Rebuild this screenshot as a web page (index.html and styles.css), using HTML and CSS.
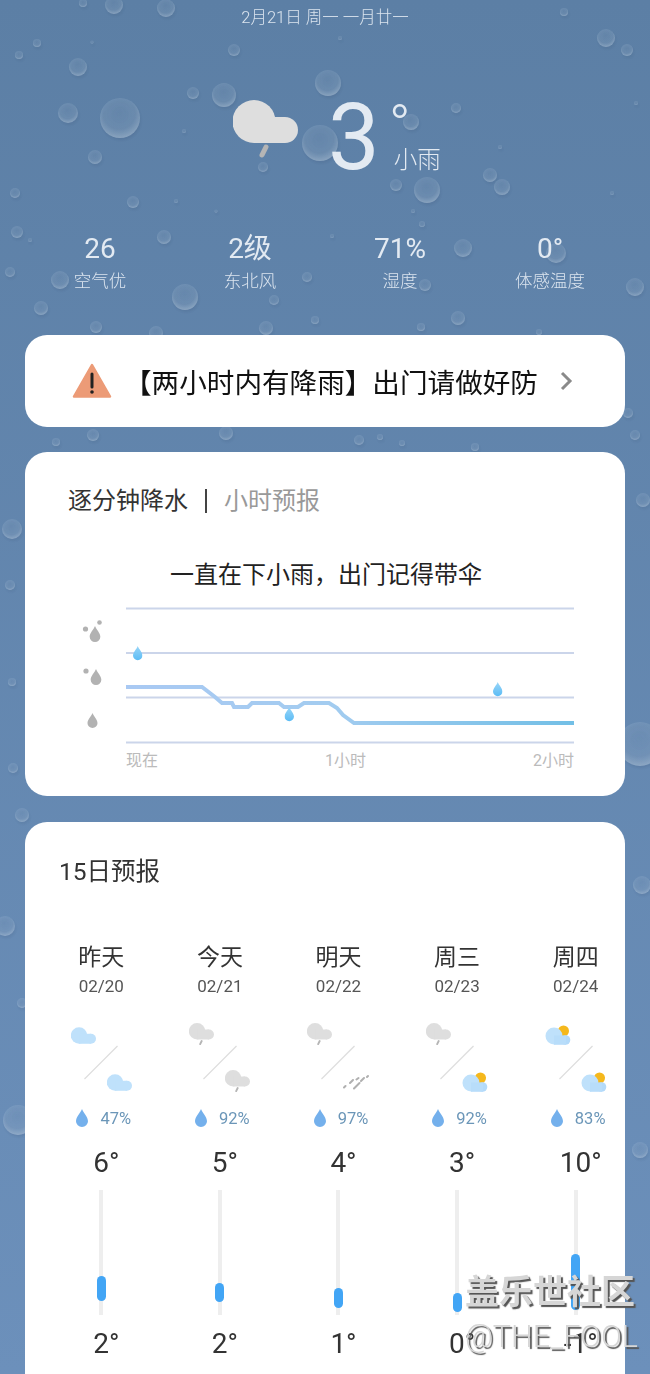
FILE: index.html
```html
<!DOCTYPE html>
<html lang="zh-CN">
<head>
  <meta charset="UTF-8" />
  <meta name="viewport" content="width=device-width, initial-scale=1.0" />
  <title>天气</title>
  <link rel="stylesheet" href="styles.css">
</head>
<body>
  <!-- shared icons -->
  <svg class="defs" width="0" height="0">
    <defs>
      <radialGradient id="dropFill" cx="48%" cy="38%" r="62%">
        <stop offset="0%" stop-color="#cfe0ee" stop-opacity="0.1" />
        <stop offset="65%" stop-color="#cfe0ee" stop-opacity="0.17" />
        <stop offset="100%" stop-color="#e4eff7" stop-opacity="0.42" />
      </radialGradient>
      <linearGradient id="lineFill" x1="0" x2="1" y1="0" y2="0">
        <stop offset="0%" stop-color="#a9c9f3" />
        <stop offset="45%" stop-color="#a3ccf0" />
        <stop offset="100%" stop-color="#72bfe6" />
      </linearGradient>
      <linearGradient id="skyDrop" x1="0" x2="0" y1="0" y2="1">
        <stop offset="0%" stop-color="#9ad6f8" />
        <stop offset="100%" stop-color="#5cbcf5" />
      </linearGradient>
      <g id="cloud">
        <circle cx="21" cy="21.500" r="21.500" />
        <circle cx="52" cy="30" r="13" />
        <rect x="21" y="17" width="31" height="26" />
      </g>
      <symbol id="cloud-blue" viewBox="0 0 65 43">
        <use href="#cloud" fill="#bfe1fb" />
      </symbol>
      <symbol id="cloud-rain" viewBox="0 0 65 60">
        <use href="#cloud" fill="#dedede" />
        <path d="M33 47l-4 8" stroke="#b5b5b5" stroke-width="5" stroke-linecap="round" />
      </symbol>
      <symbol id="sun-cloud" viewBox="0 0 26 25">
        <circle cx="18.500" cy="10" r="5.500" fill="#f5b81c" />
        <circle cx="9" cy="15" r="8.500" fill="#bfe1fb" />
        <circle cx="20.500" cy="19" r="4.800" fill="#b3dafa" />
        <rect x="9" y="14.500" width="12" height="9.300" fill="#b8ddfa" />
      </symbol>
      <symbol id="rain-bits" viewBox="0 0 26 16">
        <path d="M1 13.500l1.500-1.500M7 9l3-3M13.500 5.500l2-1.500M11 14.500l5.500-5.500M18 7l3-3M24 3l1-1" stroke="#b0b0b0" stroke-width="2" stroke-linecap="round" />
      </symbol>
      <symbol id="drop" viewBox="0 0 12 18">
        <path d="M6 0C7.500 4 12 8 12 12.200A6 5.800 0 0 1 0 12.200C0 8 4.500 4 6 0Z" />
      </symbol>
    </defs>
  </svg>

  <div class="page">
    <!-- rain on the window -->
    <svg class="rain" width="650" height="1374" viewBox="0 0 650 1374">
      <g class="beads">
        <circle cx="120" cy="118" r="20" /><circle cx="328" cy="83" r="13" /><circle cx="224" cy="95" r="12" />
        <circle cx="78" cy="67" r="9" /><circle cx="68" cy="113" r="10" /><circle cx="320" cy="143" r="18" />
        <circle cx="427" cy="190" r="13" /><circle cx="606" cy="38" r="9" /><circle cx="114" cy="5" r="9" />
        <circle cx="166" cy="8" r="9" /><circle cx="185" cy="297" r="13" /><circle cx="60" cy="280" r="9" />
        <circle cx="164" cy="237" r="7" /><circle cx="133" cy="202" r="6" /><circle cx="95" cy="157" r="7" />
        <circle cx="627" cy="50" r="6" /><circle cx="490" cy="175" r="7" /><circle cx="502" cy="187" r="8" />
        <circle cx="463" cy="248" r="9" /><circle cx="556" cy="253" r="10" /><circle cx="635" cy="287" r="9" />
        <circle cx="17" cy="232" r="6" /><circle cx="15" cy="193" r="5" /><circle cx="41" cy="308" r="7" />
        <circle cx="10" cy="272" r="5" /><circle cx="193" cy="93" r="6" /><circle cx="456" cy="108" r="5" />
        <circle cx="396" cy="185" r="6" /><circle cx="411" cy="122" r="8" /><circle cx="234" cy="50" r="6" />
        <circle cx="37" cy="43" r="4" /><circle cx="19" cy="55" r="4" /><circle cx="263" cy="167" r="5" />
        <circle cx="83" cy="3" r="4" /><circle cx="564" cy="12" r="4" /><circle cx="274" cy="300" r="5" />
        <circle cx="458" cy="318" r="7" /><circle cx="307" cy="277" r="5" /><circle cx="425" cy="285" r="6" />
        <circle cx="96" cy="327" r="6" /><circle cx="156" cy="333" r="7" /><circle cx="266" cy="328" r="7" />
        <circle cx="315" cy="320" r="4" /><circle cx="421" cy="327" r="4" /><circle cx="539" cy="332" r="3" />
        <circle cx="628" cy="413" r="5" /><circle cx="635" cy="435" r="5" /><circle cx="93" cy="435" r="6" />
        <circle cx="56" cy="442" r="4" /><circle cx="226" cy="433" r="7" /><circle cx="359" cy="440" r="5" />
        <circle cx="380" cy="437" r="3" /><circle cx="402" cy="443" r="3" /><circle cx="475" cy="447" r="4" />
        <circle cx="12" cy="529" r="10" /><circle cx="10" cy="585" r="5" /><circle cx="12" cy="682" r="4" />
        <circle cx="13" cy="768" r="5" /><circle cx="22" cy="815" r="7" /><circle cx="5" cy="926" r="10" />
        <circle cx="22" cy="1003" r="5" /><circle cx="18" cy="1120" r="15" /><circle cx="643" cy="500" r="7" />
        <circle cx="640" cy="744" r="22" /><circle cx="642" cy="885" r="9" /><circle cx="640" cy="1150" r="8" />
        <circle cx="340" cy="38" r="2" /><circle cx="92" cy="42" r="1.500" /><circle cx="636" cy="103" r="2" />
        <circle cx="184" cy="131" r="2" /><circle cx="500" cy="147" r="2" /><circle cx="612" cy="193" r="2" />
        <circle cx="176" cy="201" r="2" /><circle cx="216" cy="211" r="1.500" /><circle cx="332" cy="236" r="2" />
        <circle cx="413" cy="211" r="2" /><circle cx="422" cy="224" r="3" /><circle cx="30" cy="240" r="2" />
      </g>
    </svg>

    <header class="hero">
      <div class="hero-date">2月21日 周一 一月廿一</div>
      <div class="now">
        <svg class="now-icon" width="65" height="60"><use href="#cloud-rain" /></svg>
        <span class="now-temp">3</span>
        <div class="now-side">
          <span class="now-deg">°</span>
          <span class="now-text">小雨</span>
        </div>
      </div>
      <div class="stats">
        <div class="stat"><span class="stat-value">26</span><span class="stat-label">空气优</span></div>
        <div class="stat"><span class="stat-value">2级</span><span class="stat-label">东北风</span></div>
        <div class="stat"><span class="stat-value">71%</span><span class="stat-label">湿度</span></div>
        <div class="stat"><span class="stat-value">0°</span><span class="stat-label">体感温度</span></div>
      </div>
    </header>

    <div class="card alert">
      <svg class="alert-icon" width="40" height="36" viewBox="0 0 40 36">
        <path d="M20 2L38 33.500H2Z" fill="#ec9b77" stroke="#ec9b77" stroke-width="2.500" stroke-linejoin="round" />
        <path d="M20 11v13" stroke="#222" stroke-width="3" stroke-linecap="round" />
        <circle cx="20" cy="29" r="1.800" fill="#222" />
      </svg>
      <span class="alert-text">【两小时内有降雨】出门请做好防</span>
      <svg class="alert-more" width="14" height="22" viewBox="0 0 14 22">
        <path d="M3 3l8 8-8 8" fill="none" stroke="#8a8a8a" stroke-width="3" />
      </svg>
    </div>

    <section class="card minutes">
      <div class="tabs">
        <span class="tab-on">逐分钟降水</span>
        <span class="tab-line"></span>
        <span class="tab-off">小时预报</span>
      </div>
      <div class="minutes-title">一直在下小雨，出门记得带伞</div>
      <svg class="chart" width="520" height="147" viewBox="70 604 520 147">
        <g class="grid">
          <path d="M126 608.500H574M126 653H574M126 697.500H574M126 742.500H574" />
        </g>
        <g class="levels">
          <use href="#drop" x="89" y="626" width="12" height="16" />
          <circle cx="85.500" cy="629" r="2.600" />
          <circle cx="99.500" cy="622.500" r="2.300" />
          <use href="#drop" x="90" y="669" width="12" height="16" />
          <circle cx="86" cy="671" r="2.600" />
          <use href="#drop" x="87" y="713" width="11" height="15" />
        </g>
        <path class="curve" d="M126 687H202L215 697L222 703H232L234 707H248L252 703H279L284 707H298L304 703H329L337 708L343 715L354 723H574" />
        <g class="marks">
          <use href="#drop" x="133" y="645" width="9.500" height="16" />
          <use href="#drop" x="284.500" y="706" width="9.500" height="16" />
          <use href="#drop" x="493" y="681" width="9.500" height="16" />
        </g>
      </svg>
      <div class="axis"><span>现在</span><span>1小时</span><span>2小时</span></div>
    </section>

    <section class="card days">
      <h2 class="days-title">15日预报</h2>
      <div class="days-row">
        <div class="day">
          <div class="day-name">昨天</div>
          <div class="day-date">02/20</div>
          <svg class="day-icons" width="70" height="80" viewBox="0 0 70 80">
            <use href="#cloud-blue" x="5" y="7" width="25" height="17" />
            <path class="slash" d="M51.500 26L18.500 59" />
            <use href="#cloud-blue" x="41" y="54" width="25" height="17" />
          </svg>
          <div class="day-rain"><svg class="rain-drop" width="12" height="18"><use href="#drop" /></svg><span>47%</span></div>
          <div class="day-high">6°</div>
          <div class="range"><i class="range-bar" style="margin-top:86px;height:25px"></i></div>
          <div class="day-low">2°</div>
        </div>
        <div class="day">
          <div class="day-name">今天</div>
          <div class="day-date">02/21</div>
          <svg class="day-icons" width="70" height="80" viewBox="0 0 70 80">
            <use href="#cloud-rain" x="4" y="3" width="25" height="23" />
            <path class="slash" d="M51.500 26L18.500 59" />
            <use href="#cloud-rain" x="40" y="50" width="25" height="23" />
          </svg>
          <div class="day-rain"><svg class="rain-drop" width="12" height="18"><use href="#drop" /></svg><span>92%</span></div>
          <div class="day-high">5°</div>
          <div class="range"><i class="range-bar" style="margin-top:93px;height:19px"></i></div>
          <div class="day-low">2°</div>
        </div>
        <div class="day">
          <div class="day-name">明天</div>
          <div class="day-date">02/22</div>
          <svg class="day-icons" width="70" height="80" viewBox="0 0 70 80">
            <use href="#cloud-rain" x="4" y="3" width="25" height="23" />
            <path class="slash" d="M51.500 26L18.500 59" />
            <use href="#rain-bits" x="40" y="54" width="26" height="16" />
          </svg>
          <div class="day-rain"><svg class="rain-drop" width="12" height="18"><use href="#drop" /></svg><span>97%</span></div>
          <div class="day-high">4°</div>
          <div class="range"><i class="range-bar" style="margin-top:98px;height:20px"></i></div>
          <div class="day-low">1°</div>
        </div>
        <div class="day">
          <div class="day-name">周三</div>
          <div class="day-date">02/23</div>
          <svg class="day-icons" width="70" height="80" viewBox="0 0 70 80">
            <use href="#cloud-rain" x="4" y="3" width="25" height="23" />
            <path class="slash" d="M51.500 26L18.500 59" />
            <use href="#sun-cloud" x="40" y="48" width="26" height="25" />
          </svg>
          <div class="day-rain"><svg class="rain-drop" width="12" height="18"><use href="#drop" /></svg><span>92%</span></div>
          <div class="day-high">3°</div>
          <div class="range"><i class="range-bar" style="margin-top:103px;height:19px"></i></div>
          <div class="day-low">0°</div>
        </div>
        <div class="day">
          <div class="day-name">周四</div>
          <div class="day-date">02/24</div>
          <svg class="day-icons" width="70" height="80" viewBox="0 0 70 80">
            <use href="#sun-cloud" x="4" y="1" width="26" height="25" />
            <path class="slash" d="M51.500 26L18.500 59" />
            <use href="#sun-cloud" x="40" y="48" width="26" height="25" />
          </svg>
          <div class="day-rain"><svg class="rain-drop" width="12" height="18"><use href="#drop" /></svg><span>83%</span></div>
          <div class="day-high">10°</div>
          <div class="range"><i class="range-bar" style="margin-top:64px;height:56px"></i></div>
          <div class="day-low">-1°</div>
        </div>
      </div>
    </section>

    <!-- forum watermark -->
    <div class="mark">
      <div class="mark-site">盖乐世社区</div>
      <div class="mark-user">@THE_FOOL</div>
    </div>
  </div>
</body>
</html>
```

FILE: styles.css
```css
body {
  margin: 0;
  overflow: hidden;
  font-family: Roboto, "Noto Sans CJK SC", sans-serif;
  color: #333;
}

.defs {
  display: block;
}

.page {
  position: relative;
  height: 1374px;
  padding: 0 25px;
  box-sizing: border-box;
  overflow: hidden;
  background: linear-gradient(#5c7fa5, #6c90bb);
}

.rain {
  position: absolute;
  top: 0;
  left: 0;
}

.beads {
  opacity: 0.85;
}

.beads circle {
  fill: url(#dropFill);
  filter: drop-shadow(1px 2px 1px rgba(44, 66, 98, 0.4));
}

.hero {
  position: relative;
  height: 335px;
  color: #e3eaf2;
}

.hero-date {
  padding-top: 8px;
  font-size: 16.500px;
  font-weight: 300;
  line-height: 20px;
  text-align: center;
  color: #dce5ef;
}

.now {
  display: flex;
  height: 90px;
  margin-top: 62px;
  padding-left: 208px;
}

.now-icon {
  margin-top: 10px;
}

.now-temp {
  margin-left: 30px;
  font-size: 92px;
  font-weight: 400;
  line-height: 96px;
}

.now-side {
  display: flex;
  flex-direction: column;
  margin-left: 9px;
}

.now-deg {
  height: 52px;
  font-size: 58px;
  font-weight: 300;
  line-height: 72px;
}

.now-text {
  margin: 2px 0 0 5px;
  font-size: 23.500px;
  font-weight: 300;
  line-height: 32px;
}

.stats {
  display: grid;
  grid-template-columns: repeat(4, 150px);
  margin-top: 52px;
}

.stat {
  display: flex;
  flex-direction: column;
  align-items: center;
}

.stat-value {
  font-size: 28px;
  line-height: 34px;
}

.stat-label {
  font-size: 17.500px;
  font-weight: 300;
  line-height: 30px;
  color: #dce5ef;
}

.card {
  position: relative;
  background: #fff;
  border-radius: 22px;
  overflow: hidden;
}

.alert {
  display: flex;
  align-items: center;
  height: 92px;
  padding-left: 47px;
}

.alert-text {
  margin-left: 12px;
  font-size: 27.600px;
  color: #111;
  white-space: nowrap;
}

.alert-more {
  margin-left: 21px;
}

.minutes {
  height: 344px;
  margin-top: 25px;
  padding: 34px 0 0 43px;
  box-sizing: border-box;
}

.tabs {
  display: flex;
  align-items: center;
  height: 30px;
  font-size: 24px;
  line-height: 30px;
}

.tab-on {
  color: #333;
}

.tab-line {
  width: 2px;
  height: 24px;
  margin: 0 17px;
  background: #444;
}

.tab-off {
  color: #999;
}

.minutes-title {
  margin: 41px 0 0 102px;
  font-size: 24px;
  line-height: 36px;
  color: #222;
}

.chart {
  display: block;
  margin: 11px 0 0 2px;
}

.grid path {
  fill: none;
  stroke: #cbd5ea;
  stroke-width: 2;
}

.levels {
  fill: #b2b2b2;
}

.curve {
  fill: none;
  stroke: url(#lineFill);
  stroke-width: 4;
}

.marks {
  fill: url(#skyDrop);
}

.axis {
  display: flex;
  justify-content: space-between;
  width: 448px;
  margin-left: 58px;
  font-size: 16px;
  line-height: 20px;
  color: #bbb;
}

.days {
  height: 600px;
  margin-top: 26px;
  padding-top: 34px;
  box-sizing: border-box;
}

.days-title {
  margin: 0 0 0 34px;
  font-size: 24.500px;
  font-weight: 400;
  line-height: 32px;
  color: #333;
}

.days-row {
  display: flex;
  width: 640px;
  margin: 54px 0 0 17px;
}

.day {
  display: flex;
  flex-direction: column;
  align-items: center;
  flex: 0 0 118.600px;
}

.day-name {
  font-size: 23px;
  line-height: 32px;
}

.day-date {
  font-size: 17px;
  line-height: 24px;
  color: #555;
}

.day-icons {
  margin-top: 22px;
}

.slash {
  fill: none;
  stroke: #ddd;
  stroke-width: 1.200;
}

.day-rain {
  display: flex;
  align-items: center;
  gap: 12px;
  height: 20px;
  margin-top: 8px;
  padding-left: 5px;
  font-size: 16.500px;
  color: #6b96b8;
}

.rain-drop {
  fill: #74b0ec;
}

.day-high {
  margin-top: 19px;
  padding-left: 10px;
  font-size: 28px;
  line-height: 32px;
}

.range {
  display: flex;
  flex-direction: column;
  align-items: center;
  width: 4px;
  height: 125px;
  margin-top: 11px;
  background: #eee;
}

.range-bar {
  flex: none;
  width: 9px;
  border-radius: 4.500px;
  background: #42a5f5;
}

.day-low {
  margin-top: 13px;
  padding-left: 10px;
  font-size: 28px;
  line-height: 32px;
}

.mark {
  position: absolute;
  top: 1270px;
  left: 465px;
  color: #d6d6d6;
  text-shadow: 2px 2px 1px #555;
  white-space: nowrap;
}

.mark-site {
  font-size: 34px;
  font-weight: 700;
  line-height: 44px;
}

.mark-user {
  font-size: 30.500px;
  font-weight: 300;
  line-height: 46px;
}
```
